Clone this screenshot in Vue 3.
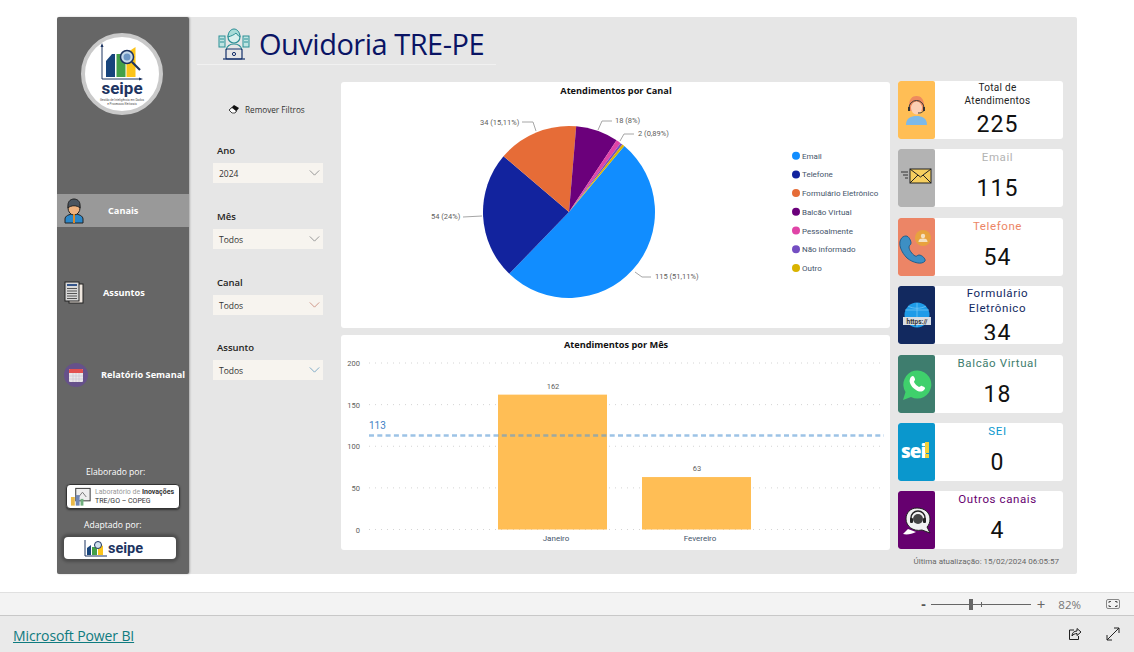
<template>
  <div class="page">
    <div class="stage">
      <div class="report">
        <!-- left navigation -->
        <aside class="sidebar">
          <div class="logo-circle">
            <svg width="70" height="70" viewBox="0 0 70 70">
              <path d="M15 6V40H54" fill="none" stroke="#1d3461" stroke-width="1"/>
              <path d="M13.500 8L15 4l1.500 4zM52 38.500l4 1.500-4 1.500z" fill="#1d3461"/>
              <path d="M19 38V22l6-7 3 0v23z" fill="#17447c"/>
              <rect x="29.500" y="15" width="9" height="23" fill="#43a047"/>
              <path d="M39.500 38V14l9-6v30z" fill="#fcc419"/>
              <circle cx="40" cy="18" r="6.500" fill="#c5d9ea" stroke="#1d3461" stroke-width="1.500"/>
              <circle cx="40" cy="18" r="3.500" fill="#6d96c4"/>
              <path d="M45 23l8 8" stroke="#1d3461" stroke-width="2.200"/>
              <text x="35" y="55" text-anchor="middle" class="logo-word">seipe</text>
              <text x="35" y="62" text-anchor="middle" class="logo-small">Gestão de Inteligência em Dados</text>
              <text x="35" y="65.500" text-anchor="middle" class="logo-small">e Processos Eleitorais</text>
            </svg>
          </div>
          <nav class="nav">
            <div class="nav-item active">
              <svg width="20" height="26" viewBox="0 0 20 26">
                <path d="M1 25v-4c0-3 4-5 9-5s9 2 9 5v4z" fill="#2b87c9" stroke="#222"/>
                <ellipse cx="10" cy="10" rx="6" ry="7" fill="#eeb27f" stroke="#222"/>
                <path d="M4 10V7c0-4 3-6 6-6s6 2 6 6v3c-3-3-9-3-12 0z" fill="#4a5560" stroke="#222"/>
                <path d="M10 16v9" stroke="#d98a2b" stroke-width="2"/>
              </svg>
              <span class="nav-text canais">Canais</span>
            </div>
            <div class="nav-item">
              <svg width="20" height="23" viewBox="0 0 20 23">
                <rect x="5" y="3" width="14" height="19" fill="#efe7df" stroke="#222"/>
                <rect x="1" y="1" width="14" height="19" fill="#d8d8d8" stroke="#222"/>
                <path d="M3 4h10" stroke="#34558b" stroke-width="2"/>
                <path d="M3 7.500h10M3 10h10M3 12.500h10M3 15h10M3 17.500h10" stroke="#555"/>
              </svg>
              <span class="nav-text assuntos">Assuntos</span>
            </div>
            <div class="nav-item">
              <svg width="24" height="24" viewBox="0 0 24 24">
                <circle cx="12" cy="12" r="12" fill="#66518a"/>
                <rect x="5" y="6" width="14" height="13" rx="1" fill="#e9e6ea"/>
                <path d="M5 7a1 1 0 0 1 1-1h12a1 1 0 0 1 1 1v3H5z" fill="#e3504f"/>
                <path d="M5 13h14M5 16h14M9 10v9M12 10v9M15 10v9" stroke="#c9c4cc" stroke-width=".6"/>
              </svg>
              <span class="nav-text relatorio">Relatório Semanal</span>
            </div>
          </nav>
          <div class="credits">
            <div class="credit-label elab">Elaborado por:</div>
            <div class="credit-logo lab">
              <svg width="23" height="20" viewBox="0 0 24 20">
                <rect x="6" y="1" width="15" height="13" fill="#eee" stroke="#333"/>
                <path d="M9 10l4-5 4 5" fill="none" stroke="#777"/>
                <rect x="1" y="10" width="4" height="9" fill="#e9b949"/>
                <rect x="6" y="8" width="4" height="11" fill="#6f86b5"/>
                <rect x="11" y="12" width="3" height="7" fill="#6fae7d"/>
              </svg>
              <div class="lab-text">
                <div><span class="lab-light">Laboratório de</span> <b>Inovações</b></div>
                <div>TRE/GO – COPEG</div>
              </div>
            </div>
            <div class="credit-label adap">Adaptado por:</div>
            <div class="credit-logo seipe">
              <svg width="24" height="18" viewBox="0 0 24 18">
                <path d="M1 1v16h22" fill="none" stroke="#1d3461"/>
                <path d="M3 16V9l4-3v10z" fill="#17447c"/>
                <rect x="8" y="8" width="5" height="8" fill="#43a047"/>
                <path d="M14 16V4l5 3v9z" fill="#fcc419"/>
                <circle cx="14" cy="6" r="3.500" fill="#cfe0ee" stroke="#1d3461"/>
              </svg>
              <span class="seipe-word">seipe</span>
            </div>
          </div>
        </aside>

        <main class="main">
          <header class="header">
            <div class="title-row">
              <svg width="32" height="32" viewBox="0 0 32 32" fill="none">
                <rect x="1" y="8" width="6" height="11" fill="#bfe4e2" stroke="#2b8f95"/>
                <rect x="25" y="8" width="6" height="11" fill="#bfe4e2" stroke="#2b8f95"/>
                <path d="M2 11h4M2 14h4M26 11h4M26 14h4" stroke="#2b8f95"/>
                <circle cx="16" cy="9" r="6" fill="#d9f0ee" stroke="#2b8f95" stroke-width="1.200"/>
                <path d="M10 9c0-5 3-8 6-8s6 3 6 8c-2-1-3-3-4-4-2 2-5 3-8 4z" fill="#a7dcd8" stroke="#2b8f95"/>
                <path d="M8 22c1-4 4-6 8-6s7 2 8 6" stroke="#2b8f95" stroke-width="1.200"/>
                <rect x="8" y="21" width="16" height="10" rx="1" fill="#e6e6e6" stroke="#14306b" stroke-width="1.200"/>
                <path d="M5 31h22" stroke="#14306b" stroke-width="1.200"/>
                <circle cx="16" cy="26" r="1.600" stroke="#14306b"/>
              </svg>
              <h1 class="title">Ouvidoria TRE-PE</h1>
            </div>
          </header>

          <div class="body">
            <section class="filters">
              <div class="clear">
                <svg width="12" height="10" viewBox="0 0 12 10">
                  <path d="M1 6l5-5 5 3-4 5H4z" fill="#111"/>
                  <path d="M1 6l3 3h3l1.500-2L4 3.500z" fill="#fff" stroke="#111" stroke-width=".7"/>
                </svg>
                <span>Remover Filtros</span>
              </div>
              <div v-for="f in filters" :key="f.label" class="filter" :class="f.cls">
                <div class="filter-label">{{ f.label }}</div>
                <div class="select">
                  <span>{{ f.value }}</span>
                  <svg width="11" height="6" viewBox="0 0 12 7" fill="none">
                    <path d="M.5.5L6 6l5.500-5.500" :stroke="f.chevron"/>
                  </svg>
                </div>
              </div>
            </section>

            <section class="charts">
              <div class="card pie-card">
                <div class="card-title">Atendimentos por Canal</div>
                <svg class="chart" width="549" height="246" viewBox="341 82 549 246">
                  <path v-for="s in slices" :key="s.name" :d="s.d" :fill="s.color"/>
                  <g class="leader" fill="none" stroke="#a6a6a6">
                    <path d="M635 272l7 5h9"/>
                    <path d="M463 217l19-1"/>
                    <path d="M522 122h11l3 9"/>
                    <path d="M598 130l4-9h10"/>
                    <path d="M620 141l4-7h10"/>
                  </g>
                  <text class="dl" x="655" y="279">115 (51,11%)</text>
                  <text class="dl" x="431" y="219">54 (24%)</text>
                  <text class="dl" x="480" y="125">34 (15,11%)</text>
                  <text class="dl" x="615" y="123">18 (8%)</text>
                  <text class="dl" x="638" y="136">2 (0,89%)</text>
                  <g v-for="(s, i) in slices" :key="'l' + s.name">
                    <circle cx="796" :cy="155.700 + i * 18.700" r="4" :fill="s.color"/>
                    <text class="lg" x="802" :y="158.700 + i * 18.700">{{ s.name }}</text>
                  </g>
                </svg>
              </div>
              <div class="card bar-card">
                <div class="card-title">Atendimentos por Mês</div>
                <svg class="chart" width="549" height="215" viewBox="341 335 549 215">
                  <g v-for="t in ticks" :key="t">
                    <path :d="`M369 ${yOf(t)}H884`" stroke="#d4d4d4" stroke-dasharray="1 5"/>
                    <text class="axis" x="360" :y="yOf(t) + 3" text-anchor="end">{{ t }}</text>
                  </g>
                  <g v-for="b in bars" :key="b.name">
                    <rect :x="b.x" :y="yOf(b.value)" width="109" :height="529.500 - yOf(b.value)" fill="#ffbe55"/>
                    <text class="axis" :x="b.x + 55" :y="yOf(b.value) - 6" text-anchor="middle">{{ b.value }}</text>
                    <text class="month" :x="b.x + 58" y="541" text-anchor="middle">{{ b.name }}</text>
                  </g>
                  <path d="M369 435.500H884" stroke="#5b9bd5" stroke-opacity=".6" stroke-width="2.500" stroke-dasharray="5 3.300"/>
                  <text class="avg" x="369" y="429">113</text>
                </svg>
              </div>
            </section>

            <section class="side">
              <div class="kpis">
                <div v-for="k in kpis" :key="k.title" class="kpi">
                  <div class="kpi-icon" :style="{ background: k.bg }">
                    <svg width="37" height="40" viewBox="0 0 37 40" v-html="k.icon"></svg>
                  </div>
                  <div class="kpi-body" :class="k.cls">
                    <div class="kpi-title" :style="{ color: k.color }">{{ k.title }}</div>
                    <div class="kpi-value">{{ k.value }}</div>
                  </div>
                </div>
              </div>
              <div class="updated">Última atualização: 15/02/2024 06:05:57</div>
            </section>
          </div>
        </main>
      </div>
    </div>

    <div class="zoombar">
      <span class="zoom-sign minus">-</span>
      <div class="slider"><i class="thumb"></i><i class="notch"></i></div>
      <span class="zoom-sign plus">+</span>
      <span class="zoom-val">82%</span>
      <svg class="fit" width="14" height="10" viewBox="0 0 14 10" fill="none" stroke="#555">
        <rect x=".5" y=".5" width="13" height="9" rx="1.500" stroke="#888"/>
        <path d="M3 4V2.500h2M11 4V2.500H9M3 6v1.500h2M11 6v1.500H9"/>
      </svg>
    </div>
    <footer class="footer">
      <a class="pbi">Microsoft Power BI</a>
      <div class="foot-icons">
        <svg width="14" height="14" viewBox="0 0 14 14" fill="none" stroke="#222">
          <path d="M6 3H1.500v9.500h9V9"/>
          <path d="M4 9c0-3 2-5 5-5V1.500l4 3.500-4 3.500V6.500C7 6.500 5 7.500 4 9z"/>
        </svg>
        <svg width="14" height="14" viewBox="0 0 14 14" fill="none" stroke="#222">
          <path d="M1 13L13 1M8 1h5v5M1 8v5h5"/>
        </svg>
      </div>
    </footer>
  </div>
</template>

<script setup>
const filters = [
  { label: 'Ano', value: '2024', chevron: '#8a8a8a', cls: '' },
  { label: 'Mês', value: 'Todos', chevron: '#8a8a8a', cls: '' },
  { label: 'Canal', value: 'Todos', chevron: '#c98a7a', cls: '' },
  { label: 'Assunto', value: 'Todos', chevron: '#6f9fc0', cls: 'last' }
]

const pieData = [
  { name: 'Email', value: 115, color: '#118dff' },
  { name: 'Telefone', value: 54, color: '#12239e' },
  { name: 'Formulário Eletrônico', value: 34, color: '#e66c37' },
  { name: 'Balcão Virtual', value: 18, color: '#6b007b' },
  { name: 'Pessoalmente', value: 2, color: '#e044a7' },
  { name: 'Não informado', value: 1, color: '#744ec2' },
  { name: 'Outro', value: 1, color: '#d9b300' }
]

// pie starts at 40deg clockwise from the top
const cx = 569
const cy = 212
const r = 86
let angle = 40
const slices = pieData.map((p) => {
  const sweep = (p.value / 225) * 360
  const a0 = (angle * Math.PI) / 180
  const a1 = ((angle + sweep) * Math.PI) / 180
  angle += sweep
  const d = `M${cx} ${cy}L${cx + r * Math.sin(a0)} ${cy - r * Math.cos(a0)}A${r} ${r} 0 ${sweep > 180 ? 1 : 0} 1 ${cx + r * Math.sin(a1)} ${cy - r * Math.cos(a1)}Z`
  return { ...p, d }
})

const ticks = [0, 50, 100, 150, 200]
const bars = [
  { name: 'Janeiro', value: 162, x: 498 },
  { name: 'Fevereiro', value: 63, x: 642 }
]
const yOf = (v) => 529.5 - (v / 200) * 166.5

const kpis = [
  {
    title: 'Total de Atendimentos', value: 225, bg: '#ffbe55', color: '#222', cls: 'total',
    icon: '<path d="M8 35c0-7 5-9 10.500-9s10.500 2 10.500 9z" fill="#7db9e8"/><path d="M11 16c0-7 3-10 7.500-10S26 9 26 16l-1 5H12z" fill="#ee8a5e"/><ellipse cx="18.500" cy="18" rx="5.500" ry="6.500" fill="#fbd0b5"/><path d="M11 18a7.500 7.500 0 0 1 15 0M26 18c0 4-2 5-6 5" fill="none" stroke="#3a3a3a"/><rect x="10" y="17" width="2" height="4" fill="#333"/><rect x="25" y="17" width="2" height="4" fill="#333"/>'
  },
  {
    title: 'Email', value: 115, bg: '#b3b3b3', color: '#b3b3b3', cls: '',
    icon: '<rect x="12" y="11" width="21" height="14" fill="#f7cf5f" stroke="#222"/><path d="M12 11l10.500 8L33 11M12 25l8-8M33 25l-8-8" fill="none" stroke="#222"/><path d="M3 14h7M5 17h5M7 20h3" stroke="#333"/>'
  },
  {
    title: 'Telefone', value: 54, bg: '#ec8566', color: '#ec8566', cls: '',
    icon: '<circle cx="25" cy="11" r="8" fill="#e8a23e"/><circle cx="25" cy="9" r="2.200" fill="#f4e1c1"/><path d="M20.500 15c0-3 2-3.500 4.500-3.500s4.500.5 4.500 3.500z" fill="#f4e1c1"/><path d="M3 12c-3 5 0 13 6 19 6 5 15 7 18 3 1-2-3-6-6-6-2 0-2 2-4 1-3-2-6-6-6-9 0-2 2-2 2-4s-2-7-5-7c-2 0-4 1-5 3z" fill="#3d8fc4" stroke="#1f5f8f"/>'
  },
  {
    title: 'Formulário Eletrônico', value: 34, bg: '#12295f', color: '#12295f', cls: 'form',
    icon: '<circle cx="19" cy="20" r="12.500" fill="#1e9be8"/><path d="M7 15h24M19 8v24M10 11c5 3 13 3 18 0" stroke="#7cc9f5" stroke-width=".7" fill="none"/><rect x="5" y="22" width="28" height="8" fill="#d9dde3"/><text x="19" y="28.500" text-anchor="middle" font-family="Roboto,sans-serif" font-size="6.500" font-weight="700" fill="#333">https://</text>'
  },
  {
    title: 'Balcão Virtual', value: 18, bg: '#3e7d6e', color: '#3e7d6e', cls: '',
    icon: '<path d="M5 36l2.500-8A14 14 0 1 1 13 33z" fill="#3fd06c"/><path d="M13 13c2-2 3-1 4 2 .5 1-1 2-1 3 1 2 3 4 5 5 1 0 2-2 3-1 3 1 4 2 2 4-2 2-5 2-8 0-3-2-5-4-6-7-1-2 0-5 1-6z" fill="#fff"/>'
  },
  {
    title: 'SEI', value: 0, bg: '#0a97cd', color: '#0a97cd', cls: '',
    icon: '<text x="3" y="26" font-family="Open Sans,sans-serif" font-size="19" font-weight="800" fill="#fff" letter-spacing="-1">sei</text><rect x="27" y="10" width="4" height="11" fill="#f2d13a"/><rect x="27" y="22" width="4" height="4" fill="#f2d13a"/>'
  },
  {
    title: 'Outros canais', value: 4, bg: '#66006f', color: '#66006f', cls: '',
    icon: '<path d="M19 8c8 0 13 5 13 11 0 3-1 6-3 8l3 6-8-3c-9 2-16-4-16-11C8 13 12 8 19 8z" fill="#f2f2f2" stroke="#222"/><path d="M5 34l5-5 8 3c-4 2-9 3-13 2z" fill="#fff"/><circle cx="20" cy="19" r="5" fill="#444"/><path d="M13 20v-2a7 7 0 0 1 14 0v2" fill="none" stroke="#222" stroke-width="1.500"/><rect x="12" y="18" width="3" height="5" rx="1" fill="#222"/><rect x="25" y="18" width="3" height="5" rx="1" fill="#222"/>'
  }
]
</script>

<style>
html, body { margin: 0; background: #fff; }
</style>

<style scoped>
.page {
  width: 1134px;
  height: 652px;
  display: flex;
  flex-direction: column;
  overflow: hidden;
  font-family: "Open Sans", "Liberation Sans", sans-serif;
}

.stage {
  height: 592px;
  padding: 17px 57px 0;
  box-sizing: border-box;
}

.report {
  width: 1020px;
  height: 557px;
  display: flex;
  background: #e6e6e6;
  border-radius: 2px;
}

/* sidebar */
.sidebar {
  width: 132px;
  height: 100%;
  flex-shrink: 0;
  background: #666;
  border-radius: 2px;
  box-shadow: 1px 0 2px rgba(0, 0, 0, .25);
  display: flex;
  flex-direction: column;
  align-items: stretch;
}

.logo-circle {
  width: 74px;
  height: 74px;
  margin: 16px 0 0 24px;
  background: #fff;
  border: 4px solid #c9c9c9;
  border-radius: 50%;
  display: flex;
  align-items: center;
  justify-content: center;
}

.logo-word {
  font-family: "Roboto", sans-serif;
  font-size: 17px;
  font-weight: 700;
  fill: #1d3461;
}

.logo-small {
  font-family: "Roboto", sans-serif;
  font-size: 3px;
  fill: #555;
}

.nav {
  margin-top: 79px;
  display: flex;
  flex-direction: column;
  gap: 49px;
}

.nav-item {
  height: 33px;
  padding-left: 7px;
  display: flex;
  align-items: center;
  color: #fff;
}

.nav-item.active { background: #999; }

.nav-text {
  font-size: 9.2px;
  font-weight: 700;
  white-space: nowrap;
}

.canais { margin-left: 24px; }
.assuntos { margin-left: 19px; }
.relatorio { margin-left: 13px; }

.credits {
  margin-top: auto;
  padding-bottom: 15px;
  display: flex;
  flex-direction: column;
}

.credit-label {
  font-size: 8.6px;
  line-height: 13px;
  color: #fff;
}

.elab { margin-left: 29px; }
.adap { margin: 9.5px 0 5.5px 27px; }

.credit-logo {
  background: #fff;
  border-radius: 4px;
  display: flex;
  align-items: center;
}

.lab {
  width: 114px;
  height: 25px;
  margin: 5.5px 0 0 9px;
  box-sizing: border-box;
  padding-left: 3px;
  gap: 2px;
  border: 1px solid #333;
  box-shadow: 0 1px 2px rgba(0, 0, 0, .5);
}

.lab-text {
  font-size: 7px;
  line-height: 9px;
  color: #333;
  white-space: nowrap;
  font-family: "Roboto", sans-serif;
}

.lab-light { color: #999; }

.seipe {
  width: 112px;
  height: 22px;
  margin-left: 7px;
  padding-left: 20px;
  box-sizing: border-box;
  box-shadow: 0 0 3px 3px rgba(0, 0, 0, .25);
}

.seipe-word {
  font-family: "Roboto", sans-serif;
  font-size: 14.500px;
  font-weight: 700;
  color: #1d3461;
}

/* main */
.main {
  flex: 1;
  min-width: 0;
  display: flex;
  flex-direction: column;
}

.header {
  height: 47px;
  width: 299px;
  margin-left: 8px;
  border-bottom: 1px solid #f1f1f1;
  box-sizing: content-box;
}

.title-row {
  display: flex;
  align-items: center;
  gap: 9px;
  padding: 9px 0 0 21px;
}

.title {
  margin: 0;
  font-size: 29px;
  font-weight: 400;
  line-height: 36px;
  color: #0a1464;
  letter-spacing: -0.5px;
  white-space: nowrap;
}

.body {
  flex: 1;
  display: flex;
  padding-top: 16px;
}

/* filters */
.filters {
  width: 110px;
  margin-left: 24px;
}

.clear {
  height: 18px;
  margin-top: 19px;
  padding-left: 15px;
  display: flex;
  align-items: center;
  gap: 5px;
  font-size: 8.2px;
  color: #333;
  white-space: nowrap;
}

.filter { margin-top: 16px; height: 50px; }
.clear + .filter { margin-top: 25px; }
.filter.last { margin-top: 15px; }

.filter-label {
  height: 15px;
  line-height: 15px;
  margin-left: 4px;
  font-size: 9.5px;
  font-weight: 600;
  color: #252423;
}

.select {
  height: 20px;
  margin-top: 5px;
  padding: 0 3px 0 6px;
  box-sizing: border-box;
  display: flex;
  align-items: center;
  justify-content: space-between;
  background: #f7f4ef;
  font-size: 8.5px;
  color: #333;
}

/* charts */
.charts {
  width: 549px;
  margin: 1px 0 0 18px;
  display: flex;
  flex-direction: column;
  gap: 7px;
}

.card {
  position: relative;
  background: #fff;
  border-radius: 3px;
}

.pie-card { height: 246px; }
.bar-card { height: 215px; }

.card-title {
  position: absolute;
  top: 2px;
  left: 0;
  right: 0;
  text-align: center;
  font-size: 9.2px;
  font-weight: 700;
  line-height: 13px;
  color: #111;
  padding-left: 1px;
}

.bar-card .card-title { top: 3px; }

.chart { display: block; }

.dl, .axis {
  font-family: "Roboto", sans-serif;
  font-size: 7.500px;
  fill: #605e5c;
}

.lg, .month {
  font-family: "Roboto", sans-serif;
  font-size: 8px;
  fill: #44546a;
}

.avg {
  font-family: "Roboto", sans-serif;
  font-size: 10px;
  fill: #3f7fc4;
}

/* kpis */
.side {
  width: 165px;
  margin-left: 8px;
  display: flex;
  flex-direction: column;
}

.kpis {
  display: flex;
  flex-direction: column;
  gap: 10.4px;
}

.kpi {
  height: 58px;
  display: flex;
  background: #fff;
  border-radius: 3px;
  overflow: hidden;
}

.kpi-icon {
  width: 37px;
  flex-shrink: 0;
  display: flex;
  align-items: center;
  justify-content: center;
  border-radius: 2px;
}

.kpi-body {
  flex: 1;
  padding-right: 3px;
  text-align: center;
  font-family: "Roboto", sans-serif;
}

.kpi-title {
  margin-top: 1px;
  height: 26px;
  font-size: 11.500px;
  line-height: 15px;
  letter-spacing: .6px;
  padding: 0 12px;
}

.kpi-body.total .kpi-title {
  height: 30px;
  font-size: 10px;
  line-height: 12.500px;
  letter-spacing: .3px;
}

/* the value of this card is cut off in the report */
.kpi-body.form {
  height: 54px;
  overflow: hidden;
}

.kpi-body.form .kpi-title {
  margin-top: 0;
  height: 35px;
}

.kpi-value {
  font-size: 23px;
  line-height: 26px;
  letter-spacing: 1px;
  color: #111;
}

.updated {
  margin-top: 8px;
  padding-right: 4px;
  text-align: right;
  font-family: "Roboto", sans-serif;
  font-size: 8px;
  line-height: 10px;
  color: #666;
  white-space: nowrap;
}

/* bottom bars */
.zoombar {
  height: 24px;
  box-sizing: border-box;
  border-top: 1px solid #e0e0e0;
  border-bottom: 1px solid #c8c8c8;
  background: #f3f3f3;
  display: flex;
  align-items: center;
  justify-content: flex-end;
  padding-right: 14px;
  color: #666;
}

.zoom-sign { font-size: 14px; line-height: 14px; }
.minus { font-weight: 700; color: #555; }
.plus { margin-left: 6px; font-size: 15px; }

.slider {
  position: relative;
  width: 100px;
  height: 1px;
  margin-left: 5px;
  background: #666;
}

.thumb {
  position: absolute;
  left: 38px;
  top: -5px;
  width: 4px;
  height: 11px;
  background: #666;
}

.notch {
  position: absolute;
  left: 50px;
  top: -2px;
  width: 1px;
  height: 5px;
  background: #666;
}

.zoom-val {
  margin-left: 13px;
  font-size: 11.500px;
  color: #777;
}

.fit { margin-left: 25px; }

.footer {
  flex: 1;
  background: #eaeaea;
  display: flex;
  align-items: center;
  justify-content: space-between;
  padding: 3px 14px 0 13px;
}

.pbi {
  font-size: 14px;
  color: #0f7b7f;
  text-decoration: underline;
  letter-spacing: -0.12px;
}

.foot-icons {
  display: flex;
  gap: 24px;
  margin-top: -3px;
}
</style>
